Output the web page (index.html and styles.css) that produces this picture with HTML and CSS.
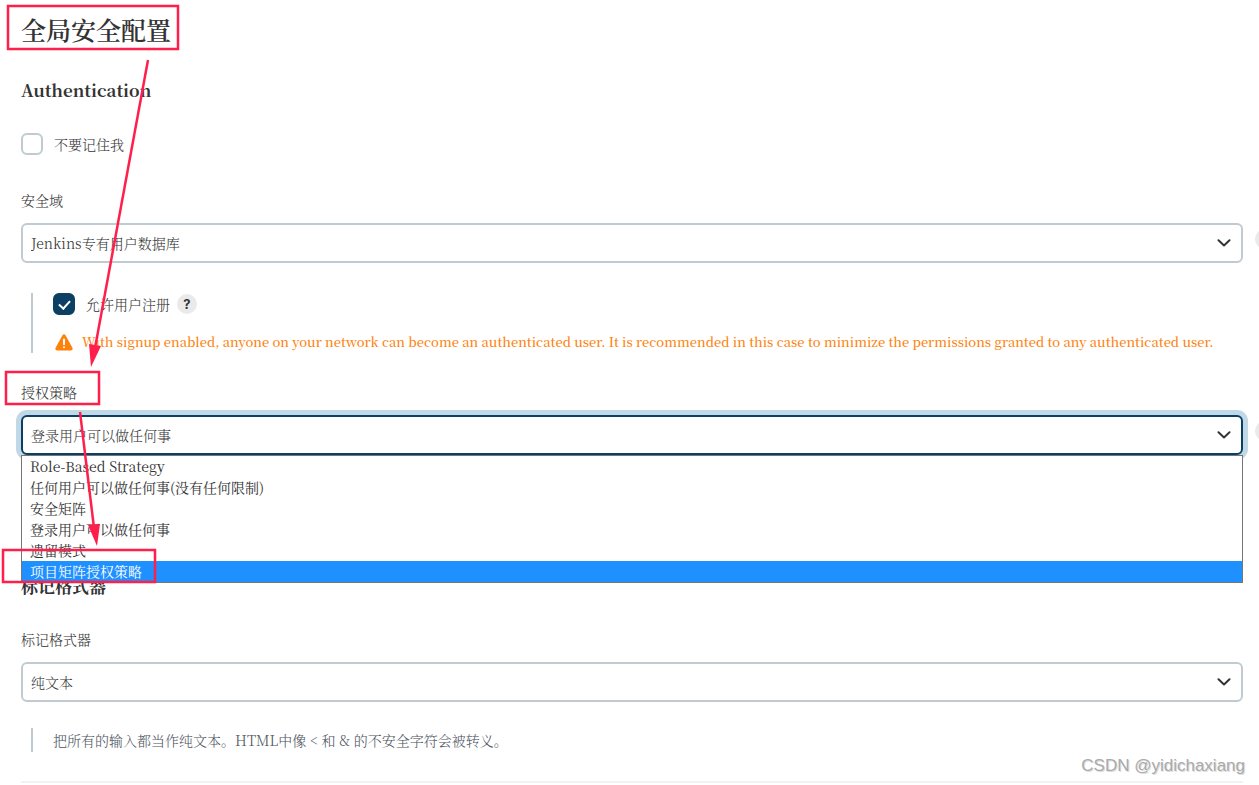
FILE: index.html
```html
<!DOCTYPE html>
<html lang="zh-CN">
<head>
    <meta charset="UTF-8">
    <meta name="viewport" content="width=device-width, initial-scale=1.0">
    <title>全局安全配置</title>
    <link rel="stylesheet" href="styles.css">
</head>
<body>
    <main class="page">
        <h1 class="page-title">全局安全配置</h1>

        <form class="config-form">
            <h2 class="section-title">Authentication</h2>

            <div class="checkbox-row">
                <input type="checkbox" class="checkbox" id="disableRememberMe">
                <label for="disableRememberMe">不要记住我</label>
            </div>

            <!-- 安全域 -->
            <div class="form-group">
                <label class="form-label" for="securityRealm">安全域</label>
                <div class="select-box">
                    <select class="select" id="securityRealm">
                        <option>Jenkins专有用户数据库</option>
                    </select>
                    <svg class="chevron" viewBox="0 0 14 8"><path d="M1.5 1.2 L7 6.4 L12.5 1.2"/></svg>
                    <button type="button" class="help-button help-outside" aria-label="安全域帮助"></button>
                </div>
            </div>

            <div class="nested nested-signup">
                <div class="checkbox-line">
                    <input type="checkbox" class="checkbox" id="allowSignup" checked>
                    <label for="allowSignup">允许用户注册</label>
                    <button type="button" class="help-button" aria-label="允许用户注册帮助">?</button>
                </div>
                <div class="warning">
                    <svg class="warning-icon" viewBox="0 0 18 17">
                        <path class="warning-shape" d="M7.6 1.1 Q9 -0.7 10.4 1.1 L17.4 13.8 Q18.3 16.2 15.9 16.5 H2.1 Q-0.3 16.2 0.6 13.8 Z"/>
                        <path class="warning-mark" d="M9 5.6 V10.2"/>
                        <circle class="warning-dot" cx="9" cy="13.2" r="1"/>
                    </svg>
                    <span>With signup enabled, anyone on your network can become an authenticated user. It is recommended in this case to minimize the permissions granted to any authenticated user.</span>
                </div>
            </div>

            <!-- 授权策略 -->
            <div class="form-group">
                <label class="form-label" for="authStrategy">授权策略</label>
                <div class="select-box">
                    <select class="select select-open" id="authStrategy">
                        <option>登录用户可以做任何事</option>
                    </select>
                    <svg class="chevron" viewBox="0 0 14 8"><path d="M1.5 1.2 L7 6.4 L12.5 1.2"/></svg>
                    <button type="button" class="help-button help-outside" aria-label="授权策略帮助"></button>
                    <ul class="dropdown" role="listbox">
                        <li role="option">Role-Based Strategy</li>
                        <li role="option">任何用户可以做任何事(没有任何限制)</li>
                        <li role="option">安全矩阵</li>
                        <li role="option">登录用户可以做任何事</li>
                        <li role="option">遗留模式</li>
                        <li role="option" class="active" aria-selected="true">项目矩阵授权策略</li>
                    </ul>
                </div>
            </div>

            <h2 class="section-title section-markup">标记格式器</h2>

            <!-- 标记格式器 -->
            <div class="form-group">
                <label class="form-label" for="markupFormatter">标记格式器</label>
                <div class="select-box">
                    <select class="select" id="markupFormatter">
                        <option>纯文本</option>
                    </select>
                    <svg class="chevron" viewBox="0 0 14 8"><path d="M1.5 1.2 L7 6.4 L12.5 1.2"/></svg>
                </div>
            </div>

            <p class="nested nested-description">把所有的输入都当作纯文本。HTML中像 &lt; 和 &amp; 的不安全字符会被转义。</p>
            <hr class="divider">
        </form>

        <!-- 标注框和箭头 -->
        <svg class="annotations" width="200" height="600" viewBox="0 0 200 600" aria-hidden="true">
            <rect x="8" y="6" width="170" height="43"/>
            <rect x="6" y="372" width="93" height="32"/>
            <rect x="3" y="550" width="152" height="32"/>
            <path class="line" d="M148 60 L95 348"/>
            <path class="head" d="M89 344 L101 346 L91 367 Z"/>
            <path class="line" d="M80 412 L94 528"/>
            <path class="head" d="M88 525 L100 524 L97 546 Z"/>
        </svg>

        <div class="watermark">CSDN @yidichaxiang</div>
    </main>
</body>
</html>
```

FILE: styles.css
```css
* {
    box-sizing: border-box;
}

body {
    margin: 0;
    background-color: #fff;
    color: #333;
    font-family: "Noto Serif CJK SC", "Source Han Serif SC", "Noto Serif", "Liberation Serif", "Noto Sans CJK SC", serif;
    font-size: 14px;
    font-weight: 300;
    line-height: 20px;
    overflow-x: hidden;
}

.page {
    position: relative;
    padding: 0 16px 0 21px;
    overflow: hidden;
}

.page-title {
    margin: 0 0 20px;
    font-size: 25px;
    font-weight: 600;
    line-height: 58px;
}

.section-title {
    margin: 0 0 31px;
    font-size: 17px;
    font-weight: 700;
    line-height: 24px;
}

.checkbox-row,
.checkbox-line {
    display: flex;
    align-items: center;
    gap: 11px;
    height: 22px;
}

.checkbox-row {
    margin-bottom: 35px;
}

.checkbox {
    appearance: none;
    display: grid;
    place-items: center;
    width: 22px;
    height: 22px;
    margin: 0;
    border: 2px solid #bfcbd0;
    border-radius: 6px;
    background-color: #fff;
}

.checkbox:checked {
    border-color: #0b3f63;
    background-color: #0b3f63;
}

/* 勾选标记 */
.checkbox:checked::after {
    content: "";
    width: 5px;
    height: 9px;
    margin-bottom: 2px;
    border: solid #fff;
    border-width: 0 2px 2px 0;
    transform: rotate(42deg);
}

.form-label {
    display: block;
    margin-bottom: 13px;
}

.select-box {
    position: relative;
}

.select {
    appearance: none;
    display: block;
    width: 100%;
    height: 40px;
    padding: 0 32px 0 8px;
    border: 2px solid #bfcbd0;
    border-radius: 6px;
    background-color: #fff;
    color: #333;
    font: inherit;
}

.select-open {
    border-color: #0b3f63;
    box-shadow: 0 0 0 5px #c1d9e7;
    outline: none;
}

.chevron {
    position: absolute;
    top: 16px;
    right: 12px;
    width: 14px;
    height: 8px;
    fill: none;
    stroke: #333;
    stroke-width: 2;
    stroke-linecap: round;
    stroke-linejoin: round;
    pointer-events: none;
}

.help-button {
    width: 20px;
    height: 20px;
    padding: 0;
    border: none;
    border-radius: 50%;
    background-color: #eaeaea;
    color: #333;
    font-family: Inter, sans-serif;
    font-size: 13px;
    font-weight: 700;
    line-height: 20px;
    text-align: center;
}

.checkbox-line .help-button {
    margin-left: -4px;
}

.help-outside {
    position: absolute;
    top: 6px;
    left: 100%;
    margin-left: 12px;
}

.nested {
    margin: 0 0 0 10px;
    padding-left: 20px;
    border-left: 2px solid #bfcbd0;
}

.nested-signup {
    margin-top: 30px;
    margin-bottom: 29px;
}

.warning {
    display: flex;
    align-items: center;
    gap: 9px;
    margin-top: 17px;
    padding: 0 0 1px 2px;
    color: #fe820a;
    font-size: 13px;
    font-weight: 500;
    white-space: nowrap;
}

.warning-icon {
    flex: none;
    width: 18px;
    height: 17px;
}

.warning-shape {
    fill: #fe820a;
}

.warning-mark {
    stroke: #fff;
    stroke-width: 2;
    stroke-linecap: round;
}

.warning-dot {
    fill: #fff;
}

/* 展开的下拉列表 */
.dropdown {
    position: absolute;
    top: 40px;
    left: 0;
    right: 0;
    margin: 0;
    padding: 0;
    border: 1px solid #767676;
    background-color: #fff;
    font-weight: 400;
    list-style: none;
}

.dropdown li {
    padding-left: 8px;
    line-height: 21px;
}

.dropdown .active {
    background-color: #1e90ff;
    color: #fff;
}

.section-markup {
    margin-top: 119px;
}

.nested-description {
    margin-top: 26px;
    color: #4d545d;
    line-height: 24px;
}

.divider {
    height: 2px;
    margin: 29px 0 0;
    border: none;
    background-color: #f2f2f2;
}

.annotations {
    position: absolute;
    top: 0;
    left: 0;
    pointer-events: none;
}

.annotations rect,
.annotations .line {
    fill: none;
    stroke: #ff1f4b;
    stroke-width: 2.5;
}

.annotations .head {
    fill: #ff1f4b;
}

.watermark {
    position: absolute;
    right: 14px;
    bottom: 7px;
    color: #aaa;
    font-family: "Liberation Sans", sans-serif;
    font-size: 17px;
    text-shadow: 1px 1px 0 #ddd;
}
```
